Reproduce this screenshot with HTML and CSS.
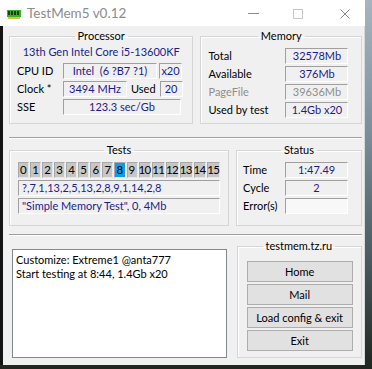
FILE: index.html
```html
<!DOCTYPE html>
<html lang="en">
<head>
    <meta charset="UTF-8">
    <title>TestMem5 v0.12</title>
    <link rel="stylesheet" href="styles.css">
</head>
<body>
    <div class="window">
        <div class="titlebar">
            <svg class="app-icon" width="14" height="10" viewBox="0 0 14 10">
                <rect x="0" y="1" width="14" height="7" fill="#3fae2a"/>
                <rect x="1" y="2" width="2" height="4" fill="#1d3b12"/>
                <rect x="4" y="2" width="2" height="4" fill="#1d3b12"/>
                <rect x="7" y="2" width="2" height="4" fill="#1d3b12"/>
                <rect x="10" y="2" width="2" height="4" fill="#1d3b12"/>
                <rect x="1" y="8" width="12" height="2" fill="#d8c23a"/>
            </svg>
            <span class="title">TestMem5 v0.12</span>
            <div class="controls">
                <svg class="ctl-min" width="11" height="11" viewBox="0 0 11 11"><line x1="0" y1="5.5" x2="11" y2="5.5" stroke="#8a8a8a"/></svg>
                <svg class="ctl-max" width="10" height="10" viewBox="0 0 10 10"><rect x="0.5" y="0.5" width="9" height="9" fill="none" stroke="#c8c8c8"/></svg>
                <svg class="ctl-close" width="10" height="10" viewBox="0 0 10 10"><path d="M0.5 0.5L9.5 9.5M9.5 0.5L0.5 9.5" stroke="#8a8a8a"/></svg>
            </div>
        </div>

        <div class="client">
            <div class="row row-top">
                <fieldset class="group processor">
                    <legend>Processor</legend>
                    <div class="cpu-name">13th Gen Intel Core i5-13600KF</div>
                    <div class="line">
                        <span class="label">CPU ID</span>
                        <span class="field w94">Intel&nbsp; (6 ?B7 ?1)</span>
                        <span class="field w23">x20</span>
                    </div>
                    <div class="line">
                        <span class="label">Clock *</span>
                        <span class="field w64">3494 MHz</span>
                        <span class="label used">Used</span>
                        <span class="field w23">20</span>
                    </div>
                    <div class="line">
                        <span class="label">SSE</span>
                        <span class="field w118">123.3 sec/Gb</span>
                    </div>
                </fieldset>

                <fieldset class="group memory">
                    <legend>Memory</legend>
                    <div class="line">
                        <span class="label wide">Total</span>
                        <span class="field w63">32578Mb</span>
                    </div>
                    <div class="line">
                        <span class="label wide">Available</span>
                        <span class="field w63">376Mb</span>
                    </div>
                    <div class="line muted">
                        <span class="label wide">PageFile</span>
                        <span class="field w63">39636Mb</span>
                    </div>
                    <div class="line">
                        <span class="label wide">Used by test</span>
                        <span class="field w63">1.4Gb x20</span>
                    </div>
                </fieldset>
            </div>

            <div class="separator sep-top"></div>

            <div class="row row-mid">
                <fieldset class="group tests">
                    <legend>Tests</legend>
                    <div class="cells">
                        <span class="cell">0</span>
                        <span class="cell">1</span>
                        <span class="cell">2</span>
                        <span class="cell">3</span>
                        <span class="cell">4</span>
                        <span class="cell">5</span>
                        <span class="cell">6</span>
                        <span class="cell">7</span>
                        <span class="cell active">8</span>
                        <span class="cell">9</span>
                        <span class="cell">10</span>
                        <span class="cell">11</span>
                        <span class="cell">12</span>
                        <span class="cell">13</span>
                        <span class="cell">14</span>
                        <span class="cell">15</span>
                    </div>
                    <div class="field long">?,7,1,13,2,5,13,2,8,9,1,14,2,8</div>
                    <div class="field long">"Simple Memory Test", 0, 4Mb</div>
                </fieldset>

                <fieldset class="group status">
                    <legend>Status</legend>
                    <div class="line">
                        <span class="label mid">Time</span>
                        <span class="field w63">1:47.49</span>
                    </div>
                    <div class="line">
                        <span class="label mid">Cycle</span>
                        <span class="field w63">2</span>
                    </div>
                    <div class="line">
                        <span class="label mid">Error(s)</span>
                        <span class="field w63 blank"></span>
                    </div>
                </fieldset>
            </div>

            <div class="separator sep-mid"></div>

            <div class="row row-bottom">
                <div class="log">Customize: Extreme1 @anta777<br>Start testing at 8:44, 1.4Gb x20</div>

                <fieldset class="group links">
                    <legend>testmem.tz.ru</legend>
                    <button class="btn">Home</button>
                    <button class="btn">Mail</button>
                    <button class="btn">Load config &amp; exit</button>
                    <button class="btn">Exit</button>
                </fieldset>
            </div>
        </div>
    </div>
</body>
</html>
```

FILE: styles.css
```css
*{
    margin: 0;
    padding: 0;
    box-sizing: border-box;
}
body{
    width: 372px;
    height: 369px;
    overflow: hidden;
    background: linear-gradient(180deg, #a7b4c0 0, #7e8f9c 35%, #4a5a60 70%, #20261f 100%);
    font-family: Lato, "Noto Sans", sans-serif;
    font-size: 10.5px;
    color: #000;
}
.window{
    width: 365px;
    height: 365px;
    display: flex;
    flex-direction: column;
}
.titlebar{
    height: 26px;
    background: #fff;
    display: flex;
    align-items: center;
    padding-left: 7px;
}
.app-icon{
    margin-top: 1px;
}
.title{
    margin-left: 6px;
    font-size: 13.5px;
    color: #8c8c8c;
}
.controls{
    margin-left: auto;
    display: flex;
    align-items: center;
    padding-right: 15px;
    margin-top: 1px;
}
.ctl-max{
    margin: 0 37px 0 34px;
}
.client{
    flex: 1;
    background: #f0f0f0;
    border-left: 3px solid #141414;
    border-right: 1px solid #d8d8d8;
    padding: 3px 2px 0 6px;
    display: flex;
    flex-direction: column;
}
.row{
    display: flex;
    gap: 7px;
}
.group{
    border: 1px solid #d5d5d5;
    box-shadow: inset 1px 1px 0 #fff;
    min-width: 0;
    padding: 0 7px;
}
.group legend{
    margin: 0 auto;
    padding: 0 3px;
    line-height: 14px;
    height: 14px;
    font-size: 11px;
}
.processor{
    width: 185px;
    height: 95px;
}
.memory{
    width: 162px;
    height: 95px;
}
.cpu-name{
    color: #1c1c8c;
    text-align: center;
    line-height: 14px;
    margin: 2px 0 4px;
    font-size: 11px;
    white-space: nowrap;
}
.line{
    display: flex;
    align-items: center;
    height: 16px;
    margin-bottom: 2px;
}
.label{
    width: 46px;
    flex-shrink: 0;
    line-height: 16px;
    font-size: 11px;
    white-space: nowrap;
}
.label.wide{
    width: 77px;
}
.label.mid{
    width: 42px;
}
.label.used{
    width: auto;
    margin: 0 4px;
}
.field{
    height: 16px;
    line-height: 14px;
    text-align: center;
    color: #1c1c8c;
    font-size: 11px;
    border: 1px solid;
    border-color: #a0a0a0 #fff #fff #a0a0a0;
    background: #f0f0f0;
    white-space: nowrap;
    overflow: hidden;
}
.w94{ width: 94px; margin-right: 2px; }
.w64{ width: 64px; }
.w23{ width: 23px; }
.w118{ width: 118px; }
.w63{ width: 63px; }
.memory .line:first-of-type{
    margin-top: 4px;
}
.memory .line{
    margin-bottom: 1px;
    height: 17px;
}
.muted .label,
.muted .field{
    color: #8e8e8e;
}
.separator{
    height: 2px;
    border-top: 1px solid #a0a0a0;
    border-bottom: 1px solid #fff;
}
.sep-top{
    margin: 13px 0 4px;
}
.sep-mid{
    margin: 8px 0 3px;
}
.tests{
    width: 222px;
    height: 83px;
    padding: 0 8px;
}
.status{
    width: 127px;
    height: 83px;
    padding: 0 6px;
}
.status .line:first-of-type{
    margin-top: 5px;
}
.blank{
    background: #f8f8f8;
}
.cells{
    display: grid;
    grid-template-columns: repeat(16, 1fr);
    gap: 1px;
    margin-top: 5px;
    height: 16px;
    margin-bottom: 2px;
}
.cell{
    background: #c6c6c6;
    border: 1px solid;
    border-color: #a8a8a8 #e8e8e8 #e8e8e8 #a8a8a8;
    text-align: center;
    line-height: 14px;
    font-size: 11.5px;
    letter-spacing: -0.8px;
    text-indent: -1px;
    white-space: nowrap;
}
.cell.active{
    background: #129be6;
}
.field.long{
    text-align: left;
    padding-left: 3px;
    margin-bottom: 2px;
}
.row-bottom{
    align-items: flex-start;
}
.log{
    width: 218px;
    height: 109px;
    margin: 10px 0 0 3px;
    background: #fff;
    border: 1px solid #828790;
    padding: 3px 3px;
    line-height: 14px;
    font-size: 11px;
}
.links{
    width: 127px;
    height: 119px;
    margin-left: 3px;
    padding: 8px 10px 0 9px;
    display: flex;
    flex-direction: column;
    gap: 2px;
}
.btn{
    height: 21px;
    width: 106px;
    background: #e1e1e1;
    border: 1px solid #adadad;
    font-family: inherit;
    font-size: 11px;
    color: #000;
}
```
